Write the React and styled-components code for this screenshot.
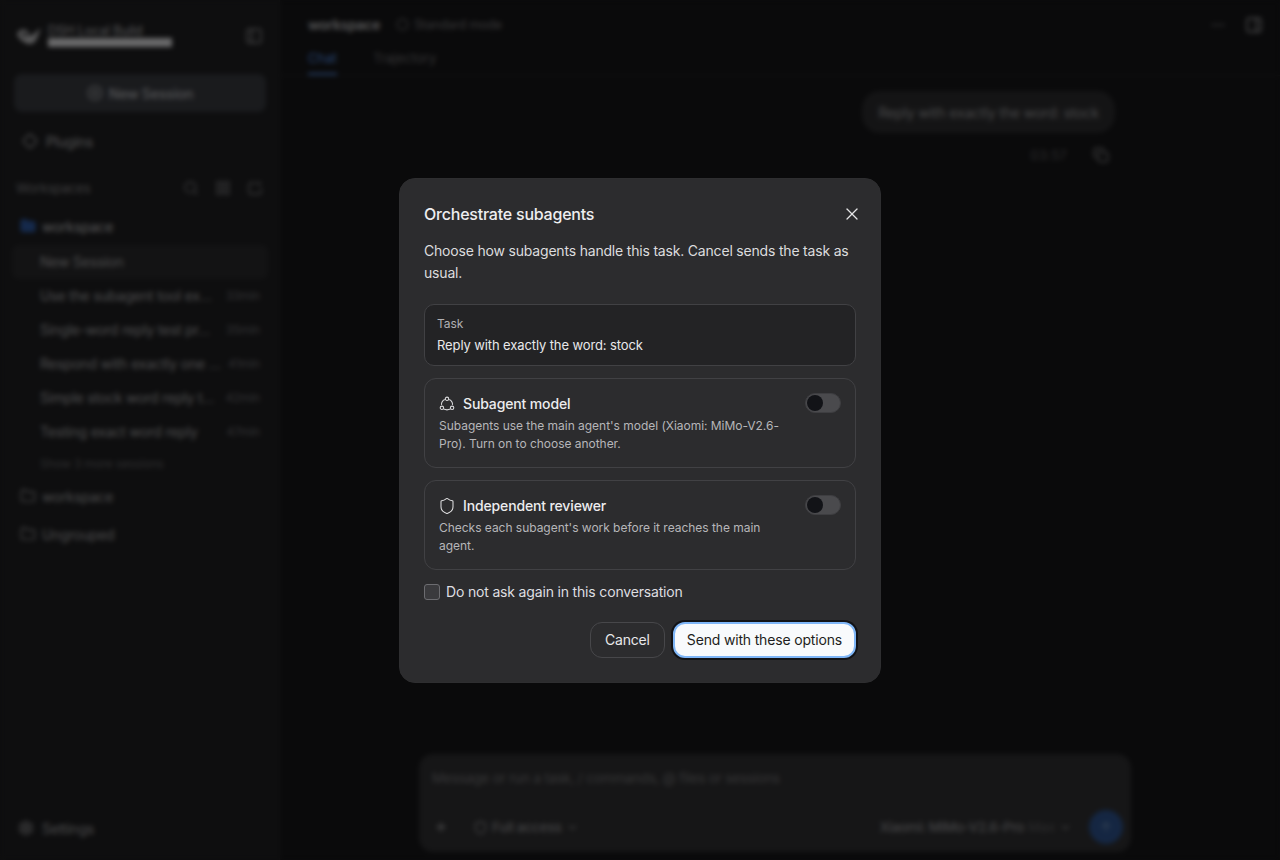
import React from "react";
import styled, { createGlobalStyle } from "styled-components";
import { Search, Shield, X, Plus, ChevronDown, Copy, CirclePlus, PanelLeft, PanelRight, Folder, Settings, Ellipsis, ArrowUp, Diamond, LayoutGrid, Circle } from "lucide-react";

const Global = createGlobalStyle`
  html, body { margin: 0; height: 100%; background: #141416; }
  body { font-family: Inter, "Liberation Sans", sans-serif; overflow: hidden; }
  * { box-sizing: border-box; }
`;

const Shell = styled.div`
  display: flex; width: 1280px; height: 860px; background: #141416; color: #d8d8da; letter-spacing: -0.2px;
`;
const Sidebar = styled.aside`
  width: 280px; flex: none; height: 100%; background: #1c1c1e; border-right: 1px solid #222224;
  display: flex; flex-direction: column; padding: 0 13px 0 14px;
`;
const Brand = styled.div`
  height: 74px; display: flex; align-items: center; gap: 6px; padding-left: 2px; padding-bottom: 3px;
`;
const BrandText = styled.div`
  display: flex; flex-direction: column; flex: 1; line-height: 1;
`;
const BrandName = styled.span`font-size: 12.5px; line-height: 14px; color: #b0b0b2; letter-spacing: 0;`;
const BrandBar = styled.span`
  display: block; width: 124px; height: 9px; background: #d2d2d4; margin-top: 0;
`;
const NewButton = styled.div`
  height: 38px; border-radius: 8px; background: #34363b; display: flex; align-items: center;
  justify-content: center; gap: 6px; font-size: 14px; color: #a8aaae; font-weight: 500;
`;
const NavRow = styled.div`
  display: flex; align-items: center; gap: 8px; height: 36px; margin-top: 11px; padding-left: 8px;
  font-size: 14px; color: #a4a4a6;
`;
const SectionHead = styled.div`
  display: flex; align-items: center; height: 36px; margin-top: 11px; padding-left: 2px; padding-right: 3px;
  font-size: 13px; color: #7a7a7c; gap: 16px;
`;
const Grow = styled.span`flex: 1;`;
const FolderRow = styled.div`
  display: flex; align-items: center; gap: 6px; height: 38px; padding-left: 6px; font-size: 14px;
  color: ${p => (p.$active ? "#b4b4b6" : "#9a9a9c")};
  margin-top: ${p => p.$top || 0}px;
`;
const SessionRow = styled.div`
  display: flex; align-items: center; justify-content: space-between; height: 34px; padding: 0 8px 2px 28px;
  font-size: 14px; color: #9c9c9e; border-radius: 6px; margin: 0 -2px;
  background: ${p => (p.$active ? "#262628" : "transparent")};
`;
const SessionTitle = styled.span`white-space: nowrap;`;
const Age = styled.span`font-size: 12px; color: #66666a;`;
const MoreLink = styled.div`
  font-size: 12px; color: #5e5e60; padding-left: 26px; height: 24px; margin-top: 2px; display: flex; align-items: center;
`;
const Foot = styled.div`
  margin-top: auto; height: 62px; display: flex; align-items: flex-start; padding: 22px 0 0 4px; gap: 8px;
  font-size: 14px; color: #9a9a9c;
`;
const Main = styled.main`
  flex: 1; display: flex; flex-direction: column; min-width: 0;
`;
const TopBar = styled.header`
  height: 76px; border-bottom: 1px solid #222224; padding: 14px 17px 0 28px; display: flex; flex-direction: column;
`;
const TopLine = styled.div`
  display: flex; align-items: center; height: 22px; gap: 16px;
`;
const Title = styled.span`font-size: 14px; font-weight: 600; color: #b0b0b2; letter-spacing: -0.3px;`;
const Mode = styled.span`
  display: flex; align-items: center; gap: 5px; font-size: 12.5px; color: #707072;
`;
const Tabs = styled.div`display: flex; gap: 36px; margin-top: 12px;`;
const Tab = styled.span`
  font-size: 13px; height: 28px; padding-top: 3px; letter-spacing: 0.1px; color: ${p => (p.$on ? "#4d83d6" : "#68686a")};
  border-bottom: 2px solid ${p => (p.$on ? "#4d83d6" : "transparent")};
`;
const Chat = styled.section`
  flex: 1; display: flex; flex-direction: column; align-items: flex-end; padding: 15px 165px 0 0;
`;
const Bubble = styled.div`
  height: 42px; display: flex; align-items: center; padding: 0 16px; border-radius: 18px; background: #29292b;
  font-size: 14px; color: #929294; letter-spacing: -0.15px;
`;
const Meta = styled.div`
  display: flex; align-items: center; gap: 26px; height: 28px; margin-top: 8px; padding-right: 6px;
  font-size: 13px; letter-spacing: 0.3px; color: #58585a;
`;
const Composer = styled.div`
  width: 712px; height: 98px; margin: 0 0 8px 139px; border-radius: 14px; background: #2c2c2e;
  padding: 16px 8px 8px 13px; display: flex; flex-direction: column;
`;
const Placeholder = styled.div`font-size: 13.5px; color: #6e6e70; letter-spacing: -0.15px;`;
const ComposerBar = styled.div`
  display: flex; align-items: center; margin-top: auto; font-size: 13.5px; font-weight: 500; color: #858588; gap: 4px;
`;
const ModelName = styled.span`letter-spacing: -0.35px;`;
const SendDot = styled.span`
  width: 34px; height: 34px; border-radius: 50%; background: #2a4d85; display: flex; align-items: center;
  justify-content: center; margin-left: 13px;
`;
const AddDot = styled.span`
  width: 24px; height: 24px; display: flex; align-items: center; justify-content: center; margin-right: 16px; margin-left: -3px; color: #9c9c9e;
`;
const Dim = styled.span`color: #505052;`;

const Overlay = styled.div`
  position: fixed; inset: 0; background: rgba(0, 0, 0, 0.5); backdrop-filter: blur(2.5px);
  display: flex; align-items: center; justify-content: center;
`;
const Dialog = styled.div`
  width: 482px; height: 505px; border-radius: 16px; background: #2c2c2e; border: 1px solid #2e2e30;
  padding: 23px 24px; color: #f2f2f3; display: flex; flex-direction: column; margin-top: 1px; letter-spacing: -0.17px;
`;
const DialogHead = styled.div`
  display: flex; align-items: center; justify-content: space-between; height: 24px;
`;
const DialogTitle = styled.h2`
  margin: 0; font-size: 16px; line-height: 24px; font-weight: 500; color: #eeeef0; letter-spacing: -0.22px;
`;
const CloseButton = styled.button`
  width: 20px; height: 20px; padding: 0; margin-right: -6px; background: none; border: 0; color: #e4e4e6;
  display: flex; align-items: center; justify-content: center;
`;
const Lead = styled.p`
  margin: 14px 0 0; font-size: 14px; line-height: 22px; color: #dcdcde; letter-spacing: -0.19px;
`;
const TaskBox = styled.div`
  margin-top: 20px; height: 62px; border-radius: 10px; border: 1px solid #414144; background: #232325;
  padding: 10px 12px; display: flex; flex-direction: column;
`;
const TaskLabel = styled.span`font-size: 12px; line-height: 18px; color: #b0b0b3; letter-spacing: -0.05px;`;
const TaskValue = styled.span`font-size: 13px; line-height: 20px; margin-top: 2px; color: #e8e8ea; letter-spacing: -0.11px;`;
const OptionCard = styled.div`
  margin-top: 12px; height: 90px; border-radius: 12px; border: 1px solid #414144; padding: 14px 14px 0;
  display: flex; gap: 16px; justify-content: space-between;
`;
const OptionBody = styled.div`width: 344px; padding-top: 1px;`;
const OptionTitle = styled.div`
  display: flex; align-items: center; gap: 8px; font-size: 14px; line-height: 20px; font-weight: 500; color: #ececee; letter-spacing: -0.14px;
`;
const OptionDesc = styled.div`
  margin-top: 3px; font-size: 12px; line-height: 18px; color: #b6b6b9; letter-spacing: -0.03px;
`;
const Toggle = styled.span`
  flex: none; width: 36px; height: 20px; border-radius: 10px; background: #4a4a4d; padding: 2px; display: block;
  border: 1px solid #3e3e41;
`;
const Knob = styled.span`
  display: block; width: 16px; height: 16px; margin: -1px 0 0 -1px; border-radius: 50%; background: #121317;
`;
const CheckRow = styled.label`
  display: flex; align-items: center; gap: 6px; margin-top: 12px; height: 20px; padding-bottom: 2px; font-size: 14px; color: #dedee0;
`;
const CheckBox = styled.span`
  width: 16px; height: 16px; margin-bottom: -2px; border-radius: 3px; border: 1px solid #6c6c70; background: #3a3a3d; display: block;
`;
const Actions = styled.div`
  display: flex; justify-content: flex-end; gap: 8px; margin-top: 20px;
`;
const Ghost = styled.button`
  height: 36px; padding: 0 14px 2px; border-radius: 12px; border: 1px solid #47474a; background: transparent;
  font: 400 14px Inter, sans-serif; letter-spacing: -0.17px; color: #e8e8ea;
`;
const Primary = styled.button`
  height: 36px; padding: 0 12px 2px; border-radius: 12px; border: 2px solid #7fb6f7; background: #f8fafc;
  font: 400 14px Inter, sans-serif; letter-spacing: -0.17px; color: #1d1d20; box-shadow: 0 0 0 2px #121316;
`;
const ShieldGlyph = styled(Shield)`
  flex: none; margin: -1px;
`;

const Logo = () => (
  <svg width="26" height="20" viewBox="0 0 26 20" fill="none">
    <path d="M1 8c2-5 8-6 11-2l2 5 11-9-5 12c-2 4-7 5-10 3C6 15 3 13 1 8Z" fill="#b4b4b6" />
    <path d="M5 8c2-2 5-1 7 2-2 1-5 1-7-2Z" fill="#1c1c1e" />
  </svg>
);
const NodesIcon = () => (
  <svg width="16" height="16" viewBox="0 0 16 16" fill="none" stroke="#dcdcde" strokeWidth="1.05">
    <path d="M5.8 3.4A5.6 5.6 0 0 0 2.5 8.9M10.2 3.4a5.6 5.6 0 0 1 3.3 5.5M4.6 13.1c2 .9 4.8.9 6.8 0" />
    <circle cx="8" cy="2.8" r="1.7" />
    <circle cx="2.9" cy="11.8" r="1.7" />
    <circle cx="13.1" cy="11.8" r="1.7" />
  </svg>
);
const NewFolderIcon = () => (
  <svg width="16" height="16" viewBox="0 0 16 16" fill="none" stroke="#77777a" strokeWidth="1.4">
    <path d="M9 3H3.5A1.5 1.5 0 0 0 2 4.500v8A1.500 1.500 0 0 0 3.500 14h9a1.500 1.500 0 0 0 1.500-1.500V8M12 1.500v4M10 3.500h4" />
  </svg>
);

const sessions = [
  ["Use the subagent tool ex…", "33min"],
  ["Single-word reply test pr…", "35min"],
  ["Respond with exactly one …", "41min"],
  ["Simple stock word reply t…", "42min"],
  ["Testing exact word reply", "47min"],
];

export default function App() {
  return (
    <>
      <Global />
      <Shell>
        <Sidebar>
          <Brand>
            <Logo />
            <BrandText>
              <BrandName>DSH Local Build</BrandName>
              <BrandBar />
            </BrandText>
            <PanelLeft size={18} color="#88888a" style={{ marginRight: 3 }} />
          </Brand>
          <NewButton><CirclePlus size={16} />New Session</NewButton>
          <NavRow><Diamond size={16} />Plugins</NavRow>
          <SectionHead>
            Workspaces<Grow />
            <Search size={16} color="#77777a" />
            <LayoutGrid size={16} color="#77777a" />
            <NewFolderIcon />
          </SectionHead>
          <FolderRow $active $top={1}><Folder size={16} color="#2f63b8" fill="#2a5295" />workspace</FolderRow>
          <SessionRow $active><SessionTitle>New Session</SessionTitle></SessionRow>
          {sessions.map(([t, a]) => (
            <SessionRow key={t}><SessionTitle>{t}</SessionTitle><Age>{a}</Age></SessionRow>
          ))}
          <MoreLink>Show 3 more sessions</MoreLink>
          <FolderRow $top={2}><Folder size={16} color="#88888a" />workspace</FolderRow>
          <FolderRow><Folder size={16} color="#88888a" />Ungrouped</FolderRow>
          <Foot><Settings size={16} />Settings</Foot>
        </Sidebar>
        <Main>
          <TopBar>
            <TopLine>
              <Title>workspace</Title>
              <Mode><Circle size={13} />Standard mode</Mode>
              <Grow />
              <Ellipsis size={16} color="#77777a" />
              <PanelRight size={18} color="#9a9a9c" style={{ marginLeft: 3 }} />
            </TopLine>
            <Tabs><Tab $on>Chat</Tab><Tab>Trajectory</Tab></Tabs>
          </TopBar>
          <Chat>
            <Bubble>Reply with exactly the word: stock</Bubble>
            <Meta>03:57<Copy size={16} color="#88888a" /></Meta>
          </Chat>
          <Composer>
            <Placeholder>Message or run a task, / commands, @ files or sessions</Placeholder>
            <ComposerBar>
              <AddDot><Plus size={14} strokeWidth={2.5} /></AddDot>
              <Shield size={15} />Full access<ChevronDown size={13} />
              <Grow />
              <ModelName>Xiaomi: MiMo-V2.6-Pro</ModelName> <Dim>Max</Dim><ChevronDown size={13} />
              <SendDot><ArrowUp size={14} color="#6b88aa" /></SendDot>
            </ComposerBar>
          </Composer>
        </Main>
      </Shell>
      <Overlay>
        <Dialog>
          <DialogHead>
            <DialogTitle>Orchestrate subagents</DialogTitle>
            <CloseButton aria-label="Close"><X size={20} strokeWidth={1.5} /></CloseButton>
          </DialogHead>
          <Lead>Choose how subagents handle this task. Cancel sends the task as usual.</Lead>
          <TaskBox>
            <TaskLabel>Task</TaskLabel>
            <TaskValue>Reply with exactly the word: stock</TaskValue>
          </TaskBox>
          <OptionCard>
            <OptionBody>
              <OptionTitle><NodesIcon />Subagent model</OptionTitle>
              <OptionDesc>Subagents use the main agent's model (Xiaomi: MiMo-V2.6-Pro). Turn on to choose another.</OptionDesc>
            </OptionBody>
            <Toggle><Knob /></Toggle>
          </OptionCard>
          <OptionCard>
            <OptionBody>
              <OptionTitle><ShieldGlyph size={18} strokeWidth={1.35} color="#e4e4e6" />Independent reviewer</OptionTitle>
              <OptionDesc>Checks each subagent's work before it reaches the main agent.</OptionDesc>
            </OptionBody>
            <Toggle><Knob /></Toggle>
          </OptionCard>
          <CheckRow><CheckBox />Do not ask again in this conversation</CheckRow>
          <Actions>
            <Ghost>Cancel</Ghost>
            <Primary>Send with these options</Primary>
          </Actions>
        </Dialog>
      </Overlay>
    </>
  );
}
